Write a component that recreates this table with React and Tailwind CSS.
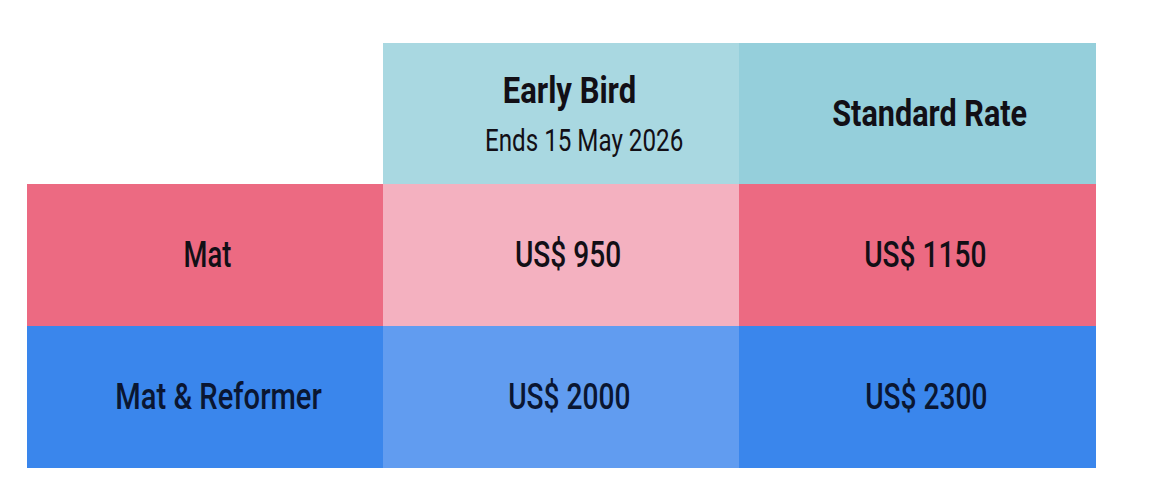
export default function App() {
  const font = { fontFamily: 'Roboto, "DejaVu Sans Condensed", sans-serif' };
  return (
    <div className="w-[1150px] h-[494px] bg-white" style={font}>
      <div className="pt-[43px] pl-[27px]">
        <div className="grid grid-cols-[356px_356px_357px] grid-rows-[141px_142px_142px] text-[#120f16]">
          <div className="bg-white" />
          <div className="bg-[#a9d8e1] flex flex-col items-center pt-[28px]">
            <div className="translate-x-[8px] scale-x-[0.86] whitespace-nowrap text-[36px] font-bold leading-[40px]">Early Bird</div>
            <div className="translate-x-[23px] scale-x-[0.78] whitespace-nowrap text-[31px] font-normal leading-[36px] mt-[12px]">Ends 15 May 2026</div>
          </div>
          <div className="bg-[#95cfdb] flex items-center justify-center">
            <div className="translate-x-[12px] scale-x-[0.85] whitespace-nowrap text-[36px] font-bold leading-[40px]">Standard Rate</div>
          </div>

          <div className="bg-[#ec6a82] flex items-center justify-center">
            <div className="translate-x-[2px] scale-x-[0.76] whitespace-nowrap text-[36px] font-medium leading-[40px]">Mat</div>
          </div>
          <div className="bg-[#f4b1c0] flex items-center justify-center">
            <div className="translate-x-[7px] scale-x-[0.78] whitespace-nowrap text-[36px] font-medium leading-[40px]">US$ 950</div>
          </div>
          <div className="bg-[#ec6a82] flex items-center justify-center">
            <div className="translate-x-[8px] scale-x-[0.78] whitespace-nowrap text-[36px] font-medium leading-[40px]">US$ 1150</div>
          </div>

          <div className="bg-[#3a86ec] flex items-center justify-center">
            <div className="translate-x-[14px] scale-x-[0.81] whitespace-nowrap text-[36px] font-medium leading-[40px] text-[#0a1632]">Mat &amp; Reformer</div>
          </div>
          <div className="bg-[#619cf0] flex items-center justify-center">
            <div className="translate-x-[8px] scale-x-[0.78] whitespace-nowrap text-[36px] font-medium leading-[40px] text-[#0a1632]">US$ 2000</div>
          </div>
          <div className="bg-[#3a86ec] flex items-center justify-center">
            <div className="translate-x-[9px] scale-x-[0.78] whitespace-nowrap text-[36px] font-medium leading-[40px] text-[#0a1632]">US$ 2300</div>
          </div>
        </div>
      </div>
    </div>
  );
}
